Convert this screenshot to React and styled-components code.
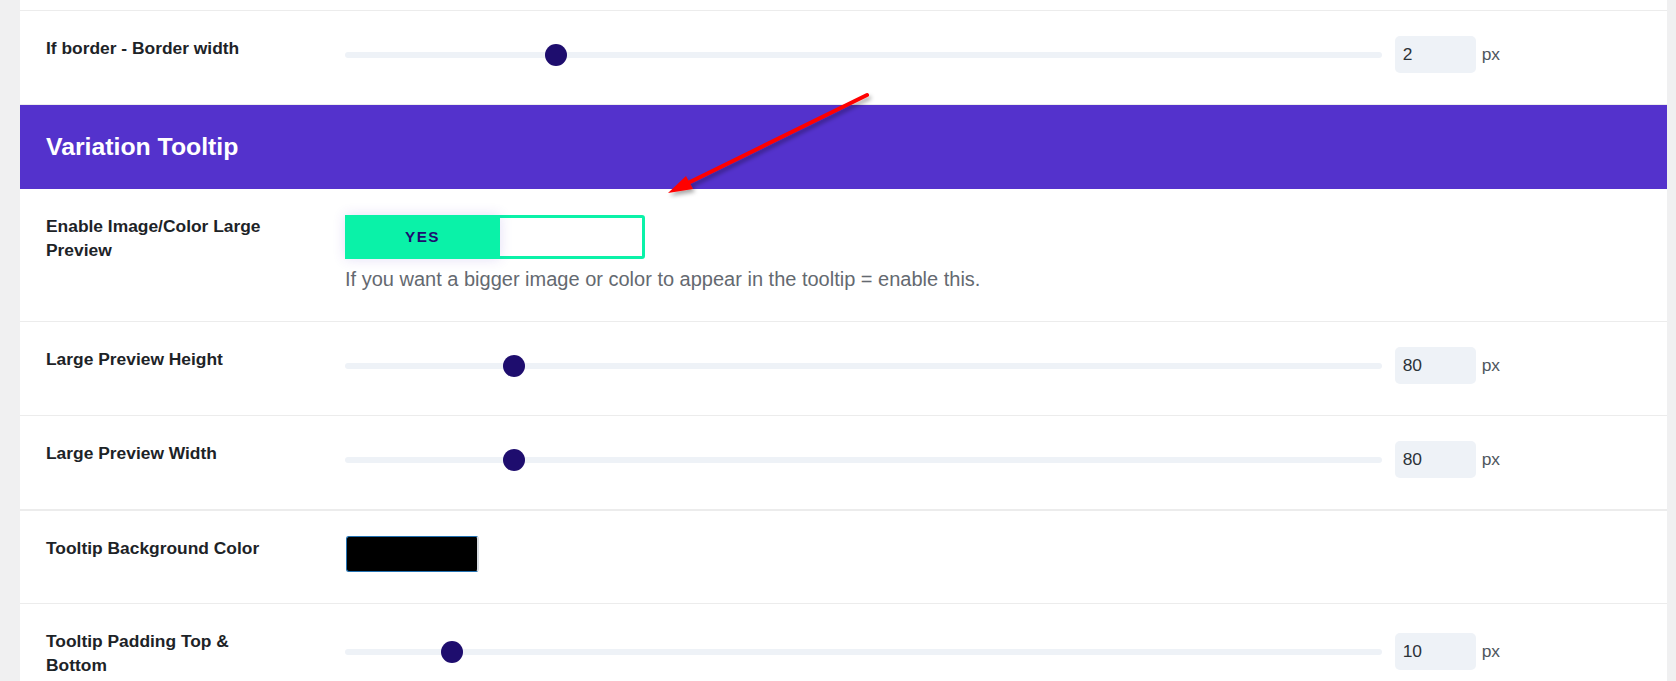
import React from 'react'
import styled, { createGlobalStyle } from 'styled-components'

const GlobalStyle = createGlobalStyle`
  html, body {
    margin: 0;
    padding: 0;
    background: #f0f0f1;
    font-family: "Liberation Sans", Arial, sans-serif;
  }
`

const Page = styled.div`
  position: relative;
  min-height: 681px;
  padding: 0 9px 0 20px;
  overflow: hidden;
`

const Panel = styled.div`
  background: #fff;
`

const TopStrip = styled.div`
  height: 10px;
  border-bottom: 1px solid #ececec;
`

const Row = styled.div`
  display: grid;
  grid-template-columns: 299px 1fr;
  align-items: start;
  padding: 25px 167px 31px 26px;
  border-bottom: ${p => (p.$thick ? 2 : 1)}px solid #ececec;
`

const Label = styled.div`
  max-width: 235px;
  font-size: 17.4px;
  font-weight: 700;
  line-height: 24px;
  color: #1d2327;
`

const SectionHeader = styled.div`
  display: flex;
  align-items: center;
  height: 84px;
  padding-left: 26px;
  background: #5432cc;
  color: #fff;
  font-size: 24.8px;
  font-weight: 700;
`

const SliderField = styled.div`
  display: flex;
  align-items: center;
  height: 37px;
  margin-top: ${p => p.$nudge || 0}px;
`

const Track = styled.div`
  position: relative;
  flex: 1;
  height: 6px;
  margin-right: 13px;
  border-radius: 3px;
  background: #eef2f7;
`

const Thumb = styled.span`
  position: absolute;
  top: 50%;
  width: 22px;
  height: 22px;
  border-radius: 50%;
  background: #1e0d6e;
  transform: translate(-50%, -50%);
`

const NumberBox = styled.div`
  display: flex;
  align-items: center;
  box-sizing: border-box;
  width: 81px;
  height: 37px;
  padding-left: 8px;
  border-radius: 5px;
  background: #eef2f7;
  font-size: 17.4px;
  color: #2c3338;
`

const Unit = styled.span`
  margin-left: 6px;
  font-size: 17.4px;
  color: #50575e;
`

const Toggle = styled.div`
  display: flex;
  box-sizing: border-box;
  width: 300px;
  height: 44px;
  margin-top: 1px;
  border: 3px solid #0af2a8;
  border-radius: 3px;
  background: #fff;
`

const ToggleOn = styled.div`
  display: flex;
  align-items: center;
  justify-content: center;
  width: 155px;
  margin: -3px 0 -3px -3px;
  background: #0af2a8;
  box-shadow: 0 0 12px rgba(84, 50, 204, 0.16);
  color: #1e0d6e;
  font-size: 15.3px;
  font-weight: 700;
  letter-spacing: 1.4px;
`

const Hint = styled.p`
  margin: 9px 0 0;
  font-size: 20px;
  line-height: 22px;
  color: #646970;
`

const Swatch = styled.div`
  box-sizing: border-box;
  width: 133px;
  height: 36px;
  margin-left: 1px;
  border: 1px solid #2271b1;
  border-right: 2px solid #d6dbe0;
  border-radius: 3px;
  background: #000;
`

const Arrow = styled.svg`
  position: absolute;
  left: 0;
  top: 0;
  pointer-events: none;
`

function Slider({ pct, value, nudge }) {
  return (
    <SliderField $nudge={nudge}>
      <Track>
        <Thumb style={{ left: `calc(11px + (100% - 22px) * ${pct})` }} />
      </Track>
      <NumberBox>{value}</NumberBox>
      <Unit>px</Unit>
    </SliderField>
  )
}

export default function App() {
  return (
    <Page>
      <GlobalStyle />
      <Panel>
        <TopStrip />
        <Row>
          <Label>If border - Border width</Label>
          <Slider pct={0.197} value="2" />
        </Row>
        <SectionHeader>Variation Tooltip</SectionHeader>
        <Row>
          <Label>Enable Image/Color Large Preview</Label>
          <div>
            <Toggle>
              <ToggleOn>YES</ToggleOn>
            </Toggle>
            <Hint>If you want a bigger image or color to appear in the tooltip = enable this.</Hint>
          </div>
        </Row>
        <Row>
          <Label>Large Preview Height</Label>
          <Slider pct={0.156} value="80" />
        </Row>
        <Row $thick>
          <Label>Large Preview Width</Label>
          <Slider pct={0.156} value="80" />
        </Row>
        <Row>
          <Label>Tooltip Background Color</Label>
          <Swatch />
        </Row>
        <Row>
          <Label>Tooltip Padding Top &amp; Bottom</Label>
          <Slider pct={0.095} value="10" nudge={4} />
        </Row>
      </Panel>

      <Arrow width="1676" height="300" viewBox="0 0 1676 300">
        <defs>
          <filter id="arrowShadow" x="-20%" y="-20%" width="140%" height="160%">
            <feDropShadow dx="2" dy="3" stdDeviation="2" floodColor="#000" floodOpacity="0.35" />
          </filter>
        </defs>
        <g filter="url(#arrowShadow)">
          <line x1="867" y1="95" x2="688" y2="183" stroke="#ff0000" strokeWidth="4" strokeLinecap="round" />
          <polygon points="668,193 686,176 693,189" fill="#ff0000" />
        </g>
      </Arrow>
    </Page>
  )
}
